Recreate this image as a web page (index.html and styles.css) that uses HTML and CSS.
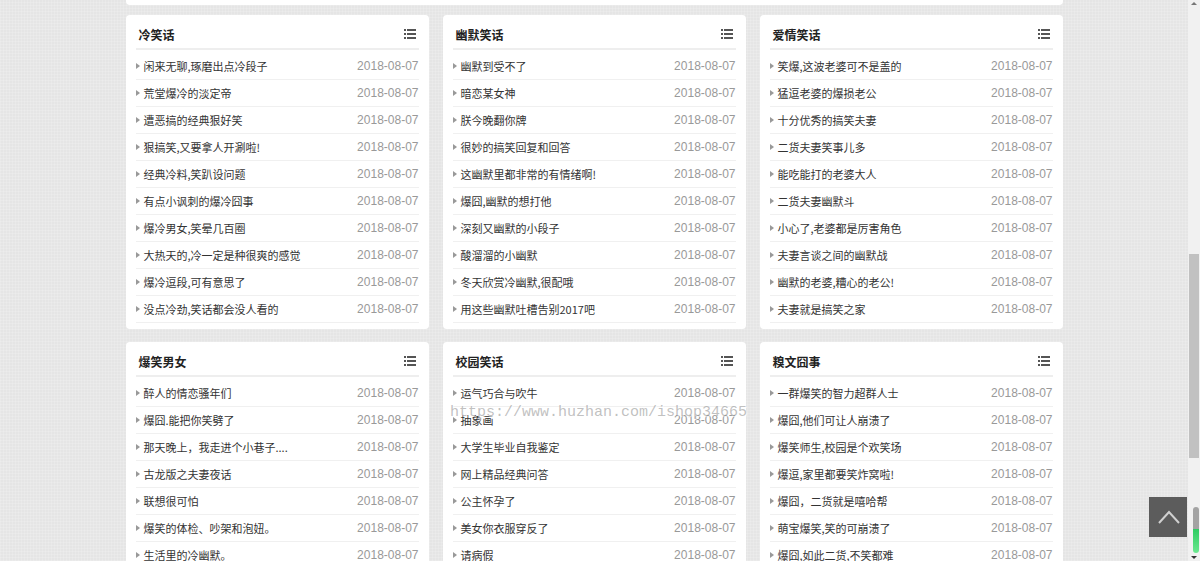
FILE: index.html
```html
<!DOCTYPE html>
<html lang="zh-CN">

<head>
    <meta charset="UTF-8">
    <meta name="viewport"
          content="width=device-width, initial-scale=1.0">
    <title>笑话大全</title>
    <link rel="stylesheet" href="styles.css">
</head>

<body>
    <div class="page">
        <main class="container">
            <div class="panel-end"></div>

            <div class="boxes">
                <section class="box">
                    <div class="box-head">
                        <h3>冷笑话</h3>
                        <a class="more" href="#"><svg width="12" height="10" viewBox="0 0 12 10"><path d="M0 0h2v2H0zM0 4h2v2H0zM0 8h2v2H0zM3 0h9v2H3zM3 4h9v2H3zM3 8h9v2H3z" fill="#555"/></svg></a>
                    </div>
                    <ul class="news">
                        <li><a href="#">闲来无聊,琢磨出点冷段子</a><span>2018-08-07</span></li>
                        <li><a href="#">荒堂爆冷的淡定帝</a><span>2018-08-07</span></li>
                        <li><a href="#">遭恶搞的经典狠好笑</a><span>2018-08-07</span></li>
                        <li><a href="#">狠搞笑,又要拿人开涮啦!</a><span>2018-08-07</span></li>
                        <li><a href="#">经典冷料,笑趴设问题</a><span>2018-08-07</span></li>
                        <li><a href="#">有点小讽刺的爆冷囧事</a><span>2018-08-07</span></li>
                        <li><a href="#">爆冷男女,笑晕几百圈</a><span>2018-08-07</span></li>
                        <li><a href="#">大热天的,冷一定是种很爽的感觉</a><span>2018-08-07</span></li>
                        <li><a href="#">爆冷逗段,可有意思了</a><span>2018-08-07</span></li>
                        <li><a href="#">没点冷劲,笑话都会没人看的</a><span>2018-08-07</span></li>
                    </ul>
                </section>

                <section class="box">
                    <div class="box-head">
                        <h3>幽默笑话</h3>
                        <a class="more" href="#"><svg width="12" height="10" viewBox="0 0 12 10"><path d="M0 0h2v2H0zM0 4h2v2H0zM0 8h2v2H0zM3 0h9v2H3zM3 4h9v2H3zM3 8h9v2H3z" fill="#555"/></svg></a>
                    </div>
                    <ul class="news">
                        <li><a href="#">幽默到受不了</a><span>2018-08-07</span></li>
                        <li><a href="#">暗恋某女神</a><span>2018-08-07</span></li>
                        <li><a href="#">朕今晚翻你牌</a><span>2018-08-07</span></li>
                        <li><a href="#">很妙的搞笑回复和回答</a><span>2018-08-07</span></li>
                        <li><a href="#">这幽默里都非常的有情绪啊!</a><span>2018-08-07</span></li>
                        <li><a href="#">爆囧,幽默的想打他</a><span>2018-08-07</span></li>
                        <li><a href="#">深刻又幽默的小段子</a><span>2018-08-07</span></li>
                        <li><a href="#">酸溜溜的小幽默</a><span>2018-08-07</span></li>
                        <li><a href="#">冬天欣赏冷幽默,很配哦</a><span>2018-08-07</span></li>
                        <li><a href="#">用这些幽默吐槽告别2017吧</a><span>2018-08-07</span></li>
                    </ul>
                </section>

                <section class="box">
                    <div class="box-head">
                        <h3>爱情笑话</h3>
                        <a class="more" href="#"><svg width="12" height="10" viewBox="0 0 12 10"><path d="M0 0h2v2H0zM0 4h2v2H0zM0 8h2v2H0zM3 0h9v2H3zM3 4h9v2H3zM3 8h9v2H3z" fill="#555"/></svg></a>
                    </div>
                    <ul class="news">
                        <li><a href="#">笑爆,这波老婆可不是盖的</a><span>2018-08-07</span></li>
                        <li><a href="#">猛逗老婆的爆损老公</a><span>2018-08-07</span></li>
                        <li><a href="#">十分优秀的搞笑夫妻</a><span>2018-08-07</span></li>
                        <li><a href="#">二货夫妻笑事儿多</a><span>2018-08-07</span></li>
                        <li><a href="#">能吃能打的老婆大人</a><span>2018-08-07</span></li>
                        <li><a href="#">二货夫妻幽默斗</a><span>2018-08-07</span></li>
                        <li><a href="#">小心了,老婆都是厉害角色</a><span>2018-08-07</span></li>
                        <li><a href="#">夫妻言谈之间的幽默战</a><span>2018-08-07</span></li>
                        <li><a href="#">幽默的老婆,糟心的老公!</a><span>2018-08-07</span></li>
                        <li><a href="#">夫妻就是搞笑之家</a><span>2018-08-07</span></li>
                    </ul>
                </section>

                <section class="box">
                    <div class="box-head">
                        <h3>爆笑男女</h3>
                        <a class="more" href="#"><svg width="12" height="10" viewBox="0 0 12 10"><path d="M0 0h2v2H0zM0 4h2v2H0zM0 8h2v2H0zM3 0h9v2H3zM3 4h9v2H3zM3 8h9v2H3z" fill="#555"/></svg></a>
                    </div>
                    <ul class="news">
                        <li><a href="#">醉人的情恋骚年们</a><span>2018-08-07</span></li>
                        <li><a href="#">爆囧.能把你笑劈了</a><span>2018-08-07</span></li>
                        <li><a href="#">那天晚上，我走进个小巷子....</a><span>2018-08-07</span></li>
                        <li><a href="#">古龙版之夫妻夜话</a><span>2018-08-07</span></li>
                        <li><a href="#">联想很可怕</a><span>2018-08-07</span></li>
                        <li><a href="#">爆笑的体检、吵架和泡妞。</a><span>2018-08-07</span></li>
                        <li><a href="#">生活里的冷幽默。</a><span>2018-08-07</span></li>
                    </ul>
                </section>

                <section class="box">
                    <div class="box-head">
                        <h3>校园笑话</h3>
                        <a class="more" href="#"><svg width="12" height="10" viewBox="0 0 12 10"><path d="M0 0h2v2H0zM0 4h2v2H0zM0 8h2v2H0zM3 0h9v2H3zM3 4h9v2H3zM3 8h9v2H3z" fill="#555"/></svg></a>
                    </div>
                    <ul class="news">
                        <li><a href="#">运气巧合与吹牛</a><span>2018-08-07</span></li>
                        <li><a href="#">抽象画</a><span>2018-08-07</span></li>
                        <li><a href="#">大学生毕业自我鉴定</a><span>2018-08-07</span></li>
                        <li><a href="#">网上精品经典问答</a><span>2018-08-07</span></li>
                        <li><a href="#">公主怀孕了</a><span>2018-08-07</span></li>
                        <li><a href="#">美女你衣服穿反了</a><span>2018-08-07</span></li>
                        <li><a href="#">请病假</a><span>2018-08-07</span></li>
                    </ul>
                </section>

                <section class="box">
                    <div class="box-head">
                        <h3>糗文囧事</h3>
                        <a class="more" href="#"><svg width="12" height="10" viewBox="0 0 12 10"><path d="M0 0h2v2H0zM0 4h2v2H0zM0 8h2v2H0zM3 0h9v2H3zM3 4h9v2H3zM3 8h9v2H3z" fill="#555"/></svg></a>
                    </div>
                    <ul class="news">
                        <li><a href="#">一群爆笑的智力超群人士</a><span>2018-08-07</span></li>
                        <li><a href="#">爆囧,他们可让人崩溃了</a><span>2018-08-07</span></li>
                        <li><a href="#">爆笑师生,校园是个欢笑场</a><span>2018-08-07</span></li>
                        <li><a href="#">爆逗,家里都要笑炸窝啦!</a><span>2018-08-07</span></li>
                        <li><a href="#">爆囧，二货就是嘻哈帮</a><span>2018-08-07</span></li>
                        <li><a href="#">萌宝爆笑,笑的可崩溃了</a><span>2018-08-07</span></li>
                        <li><a href="#">爆囧,如此二货,不笑都难</a><span>2018-08-07</span></li>
                    </ul>
                </section>
            </div>

            <div class="watermark">https://www.huzhan.com/ishop34665</div>
        </main>

        <div class="scrollbar">
            <i class="arrow up"></i>
            <div class="thumb"></div>
            <i class="arrow down"></i>
        </div>
    </div>

    <a class="gotop" href="#"><svg width="38" height="40" viewBox="0 0 38 40"><polyline points="10,26 20,15 30,26" fill="none" stroke="#d0d0d0" stroke-width="2"/></svg></a>
    <div class="progress"></div>
</body>

</html>
```

FILE: styles.css
```css
* {
    padding: 0;
    margin: 0;
    box-sizing: border-box;
}

html,
body {
    height: 100%;
    overflow: hidden;
}

body {
    font-family: "Liberation Sans", "Noto Sans CJK SC", sans-serif;
    font-size: 12px;
    color: #333;
    background-color: #e5e5e5;
    background-image:
        repeating-linear-gradient(0deg, rgba(255, 255, 255, 0.15) 0 1px, transparent 1px 3px),
        repeating-linear-gradient(90deg, rgba(255, 255, 255, 0.15) 0 1px, transparent 1px 3px);
}

a {
    text-decoration: none;
    color: inherit;
}

ul {
    list-style: none;
}

.page {
    display: flex;
    height: 100%;
}

.container {
    flex: 1;
    position: relative;
}

/* bottom of the block above */
.panel-end {
    width: 937px;
    height: 5px;
    margin: 0 auto;
    background: #fff;
    border-radius: 0 0 4px 4px;
}

.boxes {
    width: 937px;
    margin: 10px auto 0;
    display: grid;
    grid-template-columns: repeat(3, 303px);
    column-gap: 14px;
    row-gap: 13px;
}

.box {
    background: #fff;
    border-radius: 4px;
    padding: 0 10px 6px;
}

.box-head {
    height: 35px;
    padding: 5px 3px 0;
    border-bottom: 2px solid #eee;
    display: flex;
    align-items: center;
    justify-content: space-between;
}

.box-head h3 {
    font-size: 12px;
    font-weight: bold;
    color: #222;
    font-family: "Noto Sans CJK SC", sans-serif;
}

.more {
    display: flex;
}

.news {
    padding-top: 3px;
}

.news li {
    height: 27px;
    border-bottom: 1px solid #f0f0f0;
    display: flex;
    align-items: center;
    justify-content: space-between;
}

.news li a {
    font-family: "Noto Sans CJK SC", sans-serif;
    font-size: 11px;
    color: #333;
    display: flex;
    align-items: center;
}

.news li a::before {
    content: '';
    display: block;
    border-left: 4px solid #999;
    border-top: 3px solid transparent;
    border-bottom: 3px solid transparent;
    margin-right: 4px;
}

.news li span {
    color: #999;
    font-size: 12px;
}

.watermark {
    position: absolute;
    left: 450px;
    top: 404px;
    font-family: "Liberation Mono", monospace;
    font-size: 15px;
    color: rgba(140, 140, 140, 0.55);
    text-shadow: 1px 1px 0 rgba(255, 255, 255, 0.6);
    pointer-events: none;
}

/* window scrollbar */
.scrollbar {
    width: 12px;
    background: #f1f1f1;
    display: flex;
    flex-direction: column;
    align-items: center;
    padding-top: 254px;
    position: relative;
}

.scrollbar .thumb {
    width: 10px;
    height: 204px;
    background: #c1c1c1;
}

.arrow {
    position: absolute;
    left: 3px;
    border-left: 3px solid transparent;
    border-right: 3px solid transparent;
}

.arrow.up {
    top: 2px;
    border-bottom: 3px solid #777;
}

.arrow.down {
    bottom: 2px;
    border-top: 3px solid #333;
}

.gotop {
    position: fixed;
    left: 1149px;
    top: 497px;
    width: 38px;
    height: 40px;
    background: #5c5c5c;
    display: flex;
}

.progress {
    position: fixed;
    left: 1193px;
    top: 507px;
    width: 6px;
    height: 46px;
    border-radius: 3px;
    background: linear-gradient(#a3a3a3 0 48%, #2ecc62 48%, #6ce890 100%);
}
```
